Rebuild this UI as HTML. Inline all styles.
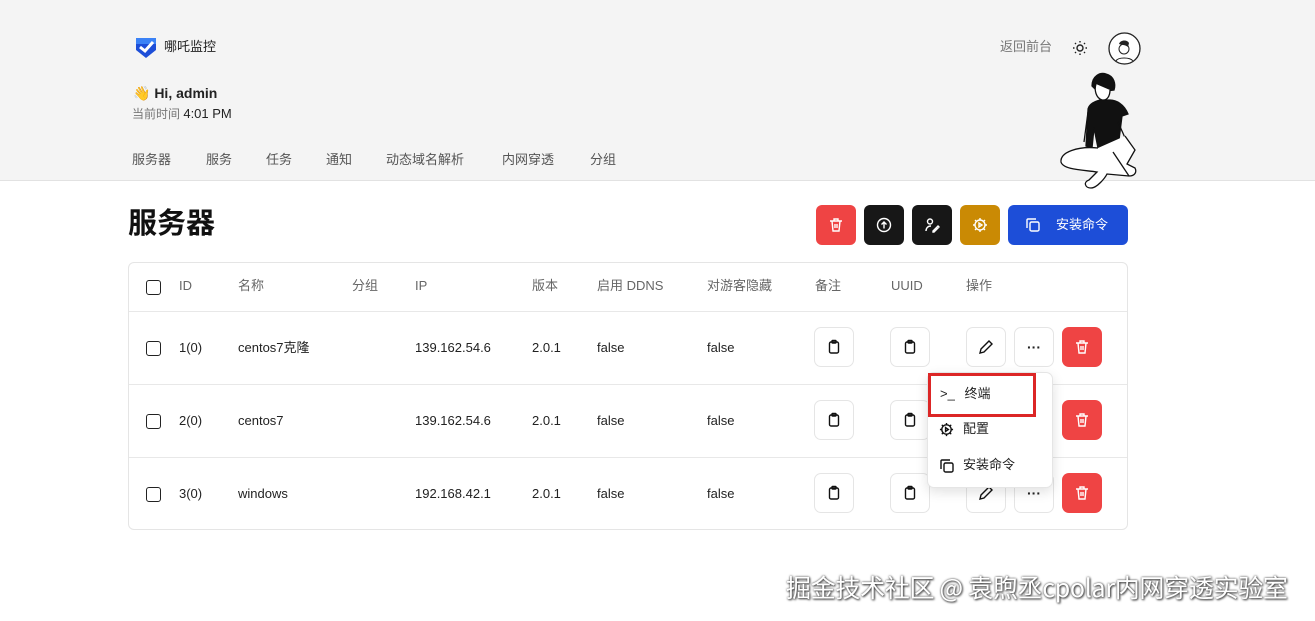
<!DOCTYPE html>
<html><head><meta charset="utf-8"><style>
*{box-sizing:border-box;margin:0;padding:0}
body{width:1315px;height:621px;overflow:hidden;background:#fff;font-family:"Liberation Sans","Noto Sans CJK SC",sans-serif;color:#222;position:relative}
.hdr{position:absolute;left:0;top:0;width:1315px;height:181px;background:#f4f4f4;border-bottom:1px solid #e2e2e2}
.abs{position:absolute;line-height:1.2}
.nav span{position:absolute;top:151px;font-size:13px;color:#555;line-height:18px}
.btn{position:absolute;width:40px;height:40px;border-radius:6px;display:flex;align-items:center;justify-content:center}
.tbl{position:absolute;left:128px;top:262px;width:1000px;height:268px;border:1px solid #e5e5e5;border-radius:6px}
.line{position:absolute;left:0;width:998px;height:1px;background:#e8e8e8}
.c{position:absolute;font-size:13px;color:#222;line-height:16px;height:16px}
.h{color:#666}
.cb{position:absolute;left:17px;width:15px;height:15px;border:1.5px solid #222;border-radius:3px}
.ob{position:absolute;width:40px;height:40px;border:1px solid #e5e5e5;border-radius:7px;display:flex;align-items:center;justify-content:center;background:#fff}
.rb{position:absolute;width:40px;height:40px;border-radius:7px;background:#ef4444;display:flex;align-items:center;justify-content:center}
</style></head><body>
<div class="hdr"></div>
<svg class="abs" style="left:135px;top:36px" width="22" height="24" viewBox="0 0 22 24"><path d="M1 2h20v12l-10 8-10-8z" fill="#1d4ed8"/><path d="M1 2h20v6H1z" fill="#3b82f6"/><path d="M5 11l5 4 8-9" stroke="#fff" stroke-width="3" fill="none"/></svg>
<div class="abs" style="left:164px;top:39px;font-size:13px;color:#222">哪吒监控</div>
<div class="abs" style="left:133px;top:85px;font-size:14px;font-weight:bold">👋 Hi, admin</div>
<div class="abs" style="left:132px;top:105px;font-size:12px;color:#777;line-height:18px">当前时间 <span style="color:#222;font-size:13px">4:01 PM</span></div>
<div class="nav"><span style="left:132px">服务器</span><span style="left:206px">服务</span><span style="left:266px">任务</span><span style="left:326px">通知</span><span style="left:386px">动态域名解析</span><span style="left:502px">内网穿透</span><span style="left:590px">分组</span></div>
<div class="abs" style="left:1000px;top:39px;font-size:13px;color:#777">返回前台</div>
<svg class="abs" style="left:1072px;top:40px" width="16" height="16" viewBox="0 0 16 16" stroke="#222" stroke-width="1.4" fill="none"><circle cx="8" cy="8" r="3"/><path d="M8 1v1.5M8 13.5V15M1 8h1.5M13.5 8H15M3 3l1 1M12 12l1 1M3 13l1-1M12 4l1-1"/></svg>
<svg class="abs" style="left:1108px;top:32px" width="33" height="33" viewBox="0 0 33 33"><circle cx="16.5" cy="16.5" r="15.5" fill="#fff" stroke="#222" stroke-width="1.3"/><path d="M11 12c1-4 8-5 10-1l-1 4c-2-2-6-2-9-3z" fill="#222"/><circle cx="16" cy="17" r="5" fill="none" stroke="#222"/><path d="M8 29c2-4 14-4 17 0" fill="none" stroke="#222"/></svg>
<svg class="abs" style="left:1058px;top:70px" width="84" height="124" viewBox="0 0 84 124" fill="none" stroke="#111" stroke-width="1.3"><path d="M34 16c0-10 8-14 14-12 8 2 10 10 8 16l-16 2z" fill="#111"/><path d="M38 14c-2 6 0 14 6 16 5 1 8-4 8-10" fill="#fff"/><path d="M42 30c-8 2-12 6-12 10l-2 36 6 2 2-20 4 20h20l4-32 6-2c-4-10-12-14-18-14z" fill="#111"/><path d="M30 42l-4 30" /><path d="M60 52l8 18" /><path d="M40 78C20 76 2 82 3 92c2 8 24 8 36 10l-8 8c-6 2-4 8 2 8 6 0 14-10 16-14l22 2c6 0 8-4 6-8l-8-4 8-14-10-14" fill="#fff"/><path d="M55 82l16 24" /></svg>
<div class="abs" style="left:128px;top:207px;font-size:29px;font-weight:bold;color:#111">服务器</div>
<div class="btn" style="left:816px;top:205px;background:#ef4444"><svg width="16" height="16" viewBox="0 0 16 16" stroke="#fff" stroke-width="1.4" fill="none"><path d="M2 4h12M6 4V2h4v2M4 4l1 10h6l1-10M7 7v4M9 7v4"/></svg></div>
<div class="btn" style="left:864px;top:205px;background:#171717"><svg width="16" height="16" viewBox="0 0 16 16" stroke="#fff" stroke-width="1.4" fill="none"><circle cx="8" cy="8" r="6.5"/><path d="M8 11.5V5M5.5 7.5 8 5l2.5 2.5"/></svg></div>
<div class="btn" style="left:912px;top:205px;background:#171717"><svg width="16" height="16" viewBox="0 0 16 16" stroke="#fff" stroke-width="1.4" fill="none"><circle cx="6" cy="4.5" r="2.5"/><path d="M2 14c0-3 2-5 5-5M9 14l5-5 1 1-5 5H9z"/></svg></div>
<div class="btn" style="left:960px;top:205px;background:#ca8a04"><svg width="16" height="16" viewBox="0 0 16 16" stroke="#fff" stroke-width="1.4" fill="none"><circle cx="8" cy="8" r="5"/><path d="M8 1v2M8 13v2M1 8h2M13 8h2M3 3l1.5 1.5M11.5 11.5 13 13M3 13l1.5-1.5M11.5 4.5 13 3M7 6v4l3-2z"/></svg></div>
<div class="btn" style="left:1008px;top:205px;width:120px;background:#1d4ed8;justify-content:flex-start;padding-left:17px;color:#fff;font-size:13px"><svg width="16" height="16" viewBox="0 0 16 16" stroke="#fff" stroke-width="1.4" fill="none"><rect x="5" y="5" width="9" height="9" rx="1.5"/><path d="M2 11V3a1 1 0 0 1 1-1h8"/></svg><span style="margin-left:15px;line-height:16px">安装命令</span></div>
<div class="tbl">
<div class="line" style="top:48px"></div><div class="line" style="top:121px"></div><div class="line" style="top:194px"></div>
<div class="cb" style="top:17px"></div><div class="cb" style="top:78px"></div><div class="cb" style="top:151px"></div><div class="cb" style="top:224px"></div>
</div>
<div class="c h" style="left:179px;top:278px">ID</div><div class="c h" style="left:238px;top:278px">名称</div><div class="c h" style="left:352px;top:278px">分组</div><div class="c h" style="left:415px;top:278px">IP</div><div class="c h" style="left:532px;top:278px">版本</div><div class="c h" style="left:597px;top:278px">启用 DDNS</div><div class="c h" style="left:707px;top:278px">对游客隐藏</div><div class="c h" style="left:815px;top:278px">备注</div><div class="c h" style="left:891px;top:278px">UUID</div><div class="c h" style="left:966px;top:278px">操作</div>
<div class="c" style="left:179px;top:340px">1(0)</div><div class="c" style="left:238px;top:340px">centos7克隆</div><div class="c" style="left:415px;top:340px">139.162.54.6</div><div class="c" style="left:532px;top:340px">2.0.1</div><div class="c" style="left:597px;top:340px">false</div><div class="c" style="left:707px;top:340px">false</div>
<div class="c" style="left:179px;top:413px">2(0)</div><div class="c" style="left:238px;top:413px">centos7</div><div class="c" style="left:415px;top:413px">139.162.54.6</div><div class="c" style="left:532px;top:413px">2.0.1</div><div class="c" style="left:597px;top:413px">false</div><div class="c" style="left:707px;top:413px">false</div>
<div class="c" style="left:179px;top:486px">3(0)</div><div class="c" style="left:238px;top:486px">windows</div><div class="c" style="left:415px;top:486px">192.168.42.1</div><div class="c" style="left:532px;top:486px">2.0.1</div><div class="c" style="left:597px;top:486px">false</div><div class="c" style="left:707px;top:486px">false</div>
<svg width="0" height="0" style="position:absolute"><defs>
<g id="clip" stroke="#111" stroke-width="1.4" fill="none"><rect x="3.5" y="3" width="9" height="11" rx="1.5"/><rect x="6" y="1.5" width="4" height="2.5" rx=".5"/></g>
<g id="trash" stroke="#fff" stroke-width="1.4" fill="none"><path d="M2 4h12M6 4V2h4v2M4 4l1 10h6l1-10M7 7v4M9 7v4"/></g>
</defs></svg>
<div class="ob" style="left:814px;top:327px"><svg width="16" height="16"><use href="#clip"/></svg></div>
<div class="ob" style="left:890px;top:327px"><svg width="16" height="16"><use href="#clip"/></svg></div>
<div class="ob" style="left:966px;top:327px"><svg width="16" height="16" viewBox="0 0 16 16" stroke="#111" stroke-width="1.4" fill="none"><path d="M2 14l1-4 8-8 3 3-8 8z"/></svg></div>
<div class="ob" style="left:1014px;top:327px;font-weight:bold;font-size:14px">···</div>
<div class="rb" style="left:1062px;top:327px"><svg width="16" height="16"><use href="#trash"/></svg></div>
<div class="ob" style="left:814px;top:400px"><svg width="16" height="16"><use href="#clip"/></svg></div>
<div class="ob" style="left:890px;top:400px"><svg width="16" height="16"><use href="#clip"/></svg></div>
<div class="rb" style="left:1062px;top:400px"><svg width="16" height="16"><use href="#trash"/></svg></div>
<div class="ob" style="left:814px;top:473px"><svg width="16" height="16"><use href="#clip"/></svg></div>
<div class="ob" style="left:890px;top:473px"><svg width="16" height="16"><use href="#clip"/></svg></div>
<div class="ob" style="left:966px;top:473px"><svg width="16" height="16" viewBox="0 0 16 16" stroke="#111" stroke-width="1.4" fill="none"><path d="M2 14l1-4 8-8 3 3-8 8z"/></svg></div>
<div class="ob" style="left:1014px;top:473px;font-weight:bold;font-size:14px">···</div>
<div class="rb" style="left:1062px;top:473px"><svg width="16" height="16"><use href="#trash"/></svg></div>
<div class="abs" style="left:927px;top:372px;width:126px;height:116px;background:#fff;border:1px solid #e5e5e5;border-radius:7px;box-shadow:0 4px 12px rgba(0,0,0,.12)"></div>
<div class="abs" style="left:928px;top:373px;width:108px;height:44px;border:3px solid #dc2626"></div>
<div class="abs" style="left:940px;top:386px;font-size:13px;line-height:16px">&gt;_ <span style="margin-left:6px">终端</span></div>
<svg class="abs" style="left:939px;top:422px" width="15" height="15" viewBox="0 0 16 16" stroke="#111" stroke-width="1.5" fill="none"><circle cx="8" cy="8" r="5"/><path d="M8 1v2M8 13v2M1 8h2M13 8h2M3 3l1.5 1.5M11.5 11.5 13 13M3 13l1.5-1.5M11.5 4.5 13 3M7 6v4l3-2z"/></svg>
<div class="abs" style="left:963px;top:421px;font-size:13px;line-height:16px">配置</div>
<svg class="abs" style="left:939px;top:458px" width="16" height="16" viewBox="0 0 16 16" stroke="#111" stroke-width="1.4" fill="none"><rect x="5" y="5" width="9" height="9" rx="1.5"/><path d="M2 11V3a1 1 0 0 1 1-1h8"/></svg>
<div class="abs" style="left:963px;top:457px;font-size:13px;line-height:16px">安装命令</div>
<div class="abs" style="left:786px;top:572px;font-size:25px;letter-spacing:-0.3px;color:#fff;text-shadow:0 0 2px #444,1px 1px 2px #333;white-space:nowrap;font-family:'Noto Sans CJK SC',sans-serif;line-height:30px">掘金技术社区 @ 袁煦丞cpolar内网穿透实验室</div>
</body></html>
